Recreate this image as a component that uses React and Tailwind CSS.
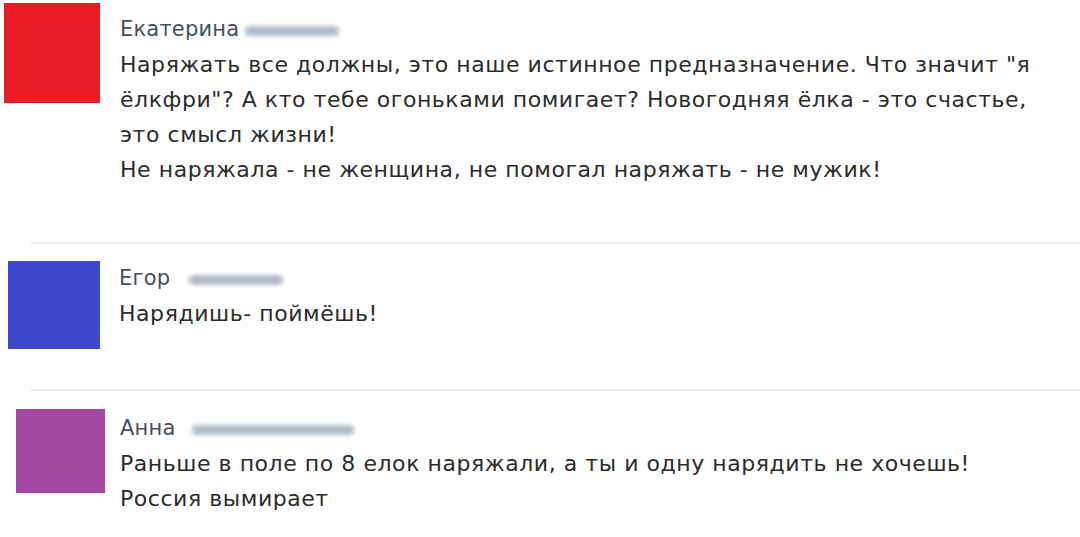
const comments = [
  {
    name: 'Екатерина',
    avatar: 'bg-[#ec1c24] w-[96px] h-[100px] ml-[4px]',
    blur: 'w-[94px] ml-[6px]',
    lines: [
      'Наряжать все должны, это наше истинное предназначение. Что значит "я',
      'ёлкфри"? А кто тебе огоньками помигает? Новогодняя ёлка - это счастье,',
      'это смысл жизни!',
      'Не наряжала - не женщина, не помогал наряжать - не мужик!',
    ],
  },
  {
    name: 'Егор',
    avatar: 'bg-[#3f48cc] w-[92px] h-[88px] ml-[8px]',
    blur: 'w-[94px] ml-[19px]',
    lines: ['Нарядишь- поймёшь!'],
  },
  {
    name: 'Анна',
    avatar: 'bg-[#a349a4] w-[89px] h-[84px] ml-[16px]',
    blur: 'w-[162px] ml-[16px]',
    lines: [
      'Раньше в поле по 8 елок наряжали, а ты и одну нарядить не хочешь!',
      'Россия вымирает',
    ],
  },
];

function Comment({ c, gap }) {
  return (
    <div className="flex items-start">
      <div className={`${c.avatar} shrink-0`} />
      <div className={gap}>
        <div className="flex items-center">
          <span className="text-[#444f5c] text-[21px] tracking-[0.2px]">{c.name}</span>
          <span className={`${c.blur} h-[10px] mt-[2px] rounded-sm bg-[#b3bdc9] blur-[2px]`} />
        </div>
        {c.lines.map((l, i) => (
          <div key={i} className="text-[#2b2b2b] whitespace-nowrap">{l}</div>
        ))}
      </div>
    </div>
  );
}

export default function App() {
  return (
    <div className="w-[1080px] h-[537px] bg-white overflow-hidden font-['DejaVu_Sans',sans-serif] text-[22px] leading-[35px] tracking-[0.55px]">
      <div className="pt-[3px] h-[242px]">
        <Comment c={comments[0]} gap="ml-[20px] mt-[9px]" />
      </div>
      <div className="ml-[31px] h-[2px] bg-[#e8e8e8]" />
      <div className="pt-[17px] h-[145px]">
        <Comment c={comments[1]} gap="ml-[19px]" />
      </div>
      <div className="ml-[31px] h-[2px] bg-[#e8e8e8]" />
      <div className="pt-[18px]">
        <Comment c={comments[2]} gap="ml-[15px] mt-[2px]" />
      </div>
    </div>
  );
}
